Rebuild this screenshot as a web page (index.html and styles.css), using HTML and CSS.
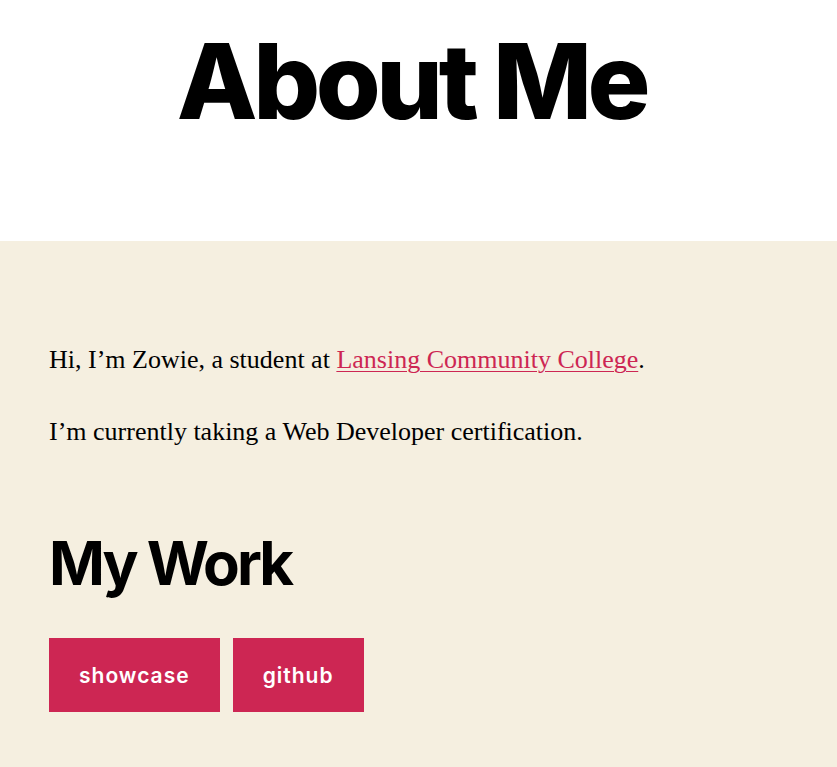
FILE: index.html
```html
<!DOCTYPE html>
<html lang="en">
<head>
<meta charset="utf-8">
<meta name="viewport" content="width=device-width, initial-scale=1">
<title>About Me</title>
<link rel="stylesheet" href="styles.css">
</head>
<body>
<header class="entry-header">
<h1 class="entry-title">About Me</h1>
</header>
<main class="entry-content">
<p>Hi, I’m Zowie, a student at <a href="#lcc">Lansing Community College</a>.</p>
<p>I’m currently taking a Web Developer certification.</p>
<h2>My Work</h2>
<div class="buttons">
<a class="button" href="#showcase">showcase</a>
<a class="button" href="#github">github</a>
</div>
</main>
</body>
</html>
```

FILE: styles.css
```css
* {
  box-sizing: border-box;
}

body {
  margin: 0;
  min-height: 100vh;
  background: #f5efe0;
  color: #000;
  font-family: Inter, sans-serif;
}

.entry-header {
  padding: 22px 48px 102px 34px;
  background: #fff;
  text-align: center;
}

.entry-title {
  margin: 0;
  font-size: 105px;
  font-weight: 800;
  line-height: 117px;
  letter-spacing: -0.042em;
}

.entry-content {
  padding: 99px 49px 55px;
}

p {
  margin: 0 0 33px;
  font-family: "Liberation Serif", serif;
  font-size: 26px;
  line-height: 39px;
}

p a {
  color: #cd2653;
  text-decoration-thickness: 1px;
  text-underline-offset: 3px;
}

h2 {
  margin: 76px 0 39px;
  font-size: 60px;
  font-weight: 700;
  line-height: 72px;
  letter-spacing: -3px;
}

.buttons {
  display: flex;
  flex-wrap: wrap;
  gap: 13px;
}

.button {
  padding: 25px 30px 23px;
  background: #cd2653;
  color: #fff;
  font-size: 21px;
  font-weight: 600;
  line-height: 26px;
  letter-spacing: 1px;
  text-decoration: none;
}
```
